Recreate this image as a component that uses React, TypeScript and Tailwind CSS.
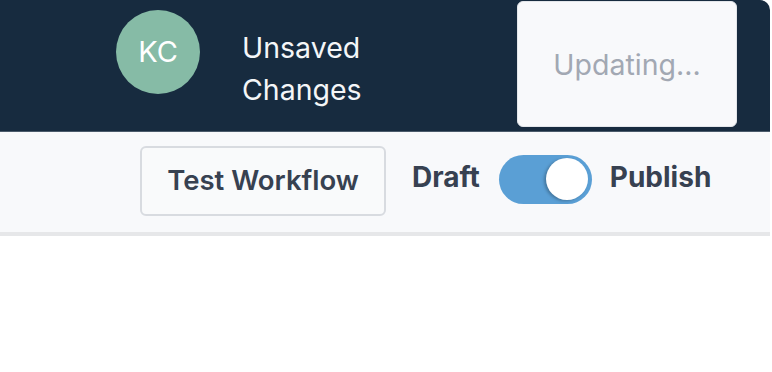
export default function App() {
  return (
    <main className="w-[772px] h-[372px] bg-white font-['Inter',sans-serif]">
      <div className="w-[770px]">
        <header className="h-[132px] flex items-start pl-[116px] bg-[#172b3f] rounded-tr-[10px] border-b border-[#4b5b6b]">
          <div className="mt-[10px] w-[84px] h-[84px] rounded-full bg-[#86bba6] flex items-center justify-center text-white text-[29px]">
            KC
          </div>
          <div className="ml-[42px] mt-[27px] text-[28.5px] leading-[42px] text-[#f4f6f8]">
            <div>Unsaved</div>
            <div>Changes</div>
          </div>
          <div className="ml-auto mr-[33px] mt-px h-[126px] w-[220px] rounded-[6px] bg-[#f8f9fb] border border-[#e3e6ea] flex items-center justify-center pt-[3px] text-[28.5px] text-[#a2a8b3]">
            Updating...
          </div>
        </header>
        <div className="h-[104px] bg-[#f8f9fb] border-b-[4px] border-[#e6e7e9] flex items-center pl-[140px] pb-[2px]">
          <button className="h-[70px] w-[246px] rounded-[6px] border-2 border-[#d8dbe0] bg-[#f9fafb] text-[27.5px] font-semibold text-[#374151]">
            Test Workflow
          </button>
          <span className="ml-[26px] text-[28px] font-bold text-[#374151] mb-[8px]">Draft</span>
          <div className="ml-[19px] w-[93px] h-[49px] rounded-full bg-[#5a9fd5] flex items-center justify-end pr-[4px] mb-[4px]">
            <div className="w-[42px] h-[42px] rounded-full bg-white shadow-[-2px_1px_3px_rgba(0,0,0,0.25)]" />
          </div>
          <span className="ml-[18px] text-[28px] font-bold text-[#374151] mb-[8px]">Publish</span>
        </div>
      </div>
    </main>
  );
}
